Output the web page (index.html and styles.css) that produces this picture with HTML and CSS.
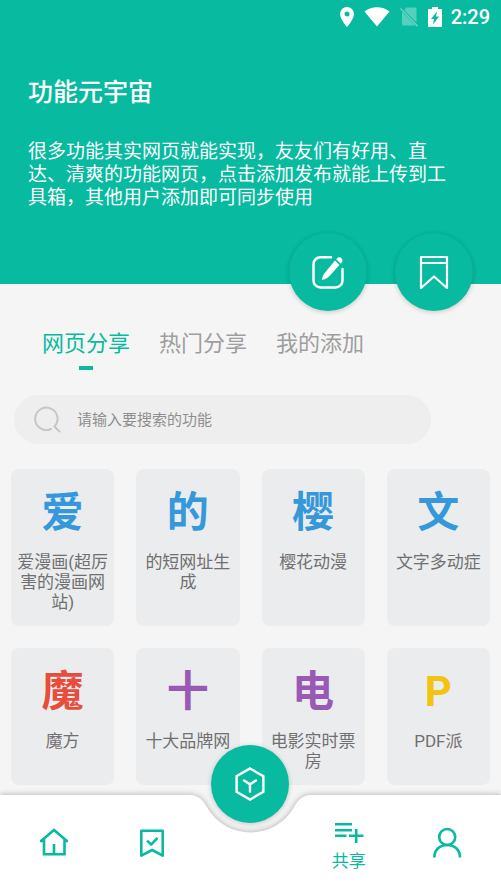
FILE: index.html
```html
<!DOCTYPE html>
<html lang="zh-CN">
<head>
<meta charset="utf-8">
<meta name="viewport" content="width=device-width, initial-scale=1">
<title>功能元宇宙</title>
<link rel="stylesheet" href="styles.css">
</head>
<body>
<header class="hero">
  <div class="status">
    <svg class="status-pin" width="14" height="20" viewBox="0 0 14 20"><path fill="#fff" fill-rule="evenodd" d="M7 0a7 7 0 0 0-7 7c0 5 7 13 7 13s7-8 7-13a7 7 0 0 0-7-7zm0 4.500a2.500 2.500 0 1 1 0 5 2.500 2.500 0 0 1 0-5z"/></svg>
    <svg class="status-wifi" width="26" height="20" viewBox="0 0 26 20"><path fill="#fff" d="M0.500 4.500C7.500-1.300 18.500-1.300 25.500 4.500L13 19.500z"/></svg>
    <svg class="status-sim" width="18" height="20" viewBox="0 0 18 20"><path fill="#fff" opacity=".32" d="M6.500 0.500H15a1.500 1.500 0 0 1 1.500 1.500v13.500L4 3zM2 4.800L15.500 18.500H3.500A1.500 1.500 0 0 1 2 17z"/><path stroke="#fff" opacity=".4" stroke-width="1.300" d="M0.500 1.500L17.500 19"/></svg>
    <svg class="status-battery" width="14" height="20" viewBox="0 0 14 20"><path fill="#fff" d="M4 0h6v2h3a1 1 0 0 1 1 1v16a1 1 0 0 1-1 1H1a1 1 0 0 1-1-1V3a1 1 0 0 1 1-1h3z"/><path fill="#07baa0" d="M9 4.500L3 12h3L5 17.500l6-8H8z"/></svg>
    <span>2:29</span>
  </div>
  <h1>功能元宇宙</h1>
  <p>很多功能其实网页就能实现，友友们有好用、直达、清爽的功能网页，点击添加发布就能上传到工具箱，其他用户添加即可同步使用</p>
</header>

<main>
  <div class="actions">
    <button class="fab" type="button" aria-label="添加">
      <svg width="36" height="36" viewBox="0 0 36 36" fill="none"><path stroke="#fff" stroke-width="2.500" stroke-linecap="round" d="M21 3.200H10.500a7 7 0 0 0-7 7V26.500a7 7 0 0 0 7 7H25.500a7 7 0 0 0 7-7V15"/><path fill="#fff" d="M25 6.500l4.500 4.500L19 22.500c-2 2-4.500 3-7.200 3.500.5-2.700 1.500-5.500 3.500-7.700zM26.200 5.200l1.300-1.200c2.400-2.200 6.500 1.500 4.500 4.300l-1.300 1.500z"/></svg>
    </button>
    <button class="fab" type="button" aria-label="收藏">
      <svg width="36" height="36" viewBox="0 0 36 36" fill="none" stroke="#fff" stroke-width="2.200" stroke-linejoin="round"><path d="M5 3h26v31L18 22.500 5 34zM5 9h26"/></svg>
    </button>
  </div>

  <div class="tabs" role="tablist">
    <button class="tab tab-active" type="button" role="tab" aria-selected="true">网页分享</button>
    <button class="tab" type="button" role="tab" aria-selected="false">热门分享</button>
    <button class="tab" type="button" role="tab" aria-selected="false">我的添加</button>
  </div>

  <label class="search">
    <svg width="28" height="28" viewBox="0 0 28 28" fill="none" stroke="#c6c6c6" stroke-width="2" stroke-linecap="round"><path d="M17 23A11.200 11.200 0 1 1 20.500 20.500L25.500 25.500"/></svg>
    <input type="search" placeholder="请输入要搜索的功能" aria-label="搜索功能">
  </label>

  <div class="grid">
    <a class="card" href="#"><strong class="blue">爱</strong><span>爱漫画(超厉害的漫画网站)</span></a>
    <a class="card" href="#"><strong class="blue">的</strong><span>的短网址生成</span></a>
    <a class="card" href="#"><strong class="blue">樱</strong><span>樱花动漫</span></a>
    <a class="card" href="#"><strong class="blue">文</strong><span>文字多动症</span></a>
    <a class="card" href="#"><strong class="red">魔</strong><span>魔方</span></a>
    <a class="card" href="#"><strong class="purple">十</strong><span>十大品牌网</span></a>
    <a class="card" href="#"><strong class="purple">电</strong><span>电影实时票房</span></a>
    <a class="card" href="#"><strong class="yellow">P</strong><span>PDF派</span></a>
  </div>
</main>

<nav class="nav">
  <div class="nav-shape">
    <i></i>
    <svg width="121" height="95" viewBox="0 0 121 95"><path fill="#fff" d="M0 0C8 0 13 5 17.500 13A50 50 0 0 0 103.500 13C108 5 113 0 121 0V95H0z"/></svg>
    <i></i>
  </div>
  <a class="nav-item" href="#" aria-label="首页">
    <svg width="30" height="30" viewBox="0 0 30 30" fill="none" stroke="#07baa0" stroke-width="2.600"><path d="M1.500 13.500L15 2 28.500 13.500M5 11.500v14.700h20.500V11.500M15 27V16M1 13h5M24.500 13H29"/></svg>
  </a>
  <a class="nav-item" href="#" aria-label="书签">
    <svg width="30" height="30" viewBox="0 0 30 30" fill="none" stroke="#07baa0" stroke-width="2.600" stroke-linejoin="round"><path d="M4.300 2.700h21.400V27.700L15.200 22 4.300 27.700z"/><path d="M10.200 12.700l4 4 6.300-6.800"/></svg>
  </a>
  <button class="fab fab-center" type="button" aria-label="工具箱">
    <svg width="36" height="36" viewBox="0 0 36 36" fill="none" stroke="#fff" stroke-width="2.400"><path d="M18 2.500L31.400 10.200V25.800L18 33.500 4.600 25.800V10.200z"/><path stroke-linecap="round" d="M12 14.500l6 3.800 6-3.800M18 18.300V25.500"/></svg>
  </button>
  <a class="nav-item nav-current" href="#">
    <svg width="30" height="24" viewBox="0 0 30 24" fill="none" stroke="#07baa0" stroke-width="2.600"><path d="M1 4.300h17M1 10.300h17M1 15.800h11.500M15 15.800h14.500M22.200 9v14"/></svg>
    <span>共享</span>
  </a>
  <a class="nav-item" href="#" aria-label="我的">
    <svg width="30" height="32" viewBox="0 0 30 32" fill="none" stroke="#07baa0" stroke-width="2.600"><circle cx="15.200" cy="10" r="8"/><path d="M2.300 30.500C2.300 22.500 8 18 15.200 18S28 22.500 28 30.500"/></svg>
  </a>
</nav>
</body>
</html>
```
FILE: styles.css
```css
:root {
  --teal: #07baa0;
}

* {
  box-sizing: border-box;
}

body {
  margin: 0;
  min-height: 100vh;
  display: flex;
  flex-direction: column;
  background: #f5f5f5;
  font-family: Roboto, "Noto Sans CJK SC", sans-serif;
}

button {
  border: 0;
  padding: 0;
  background: none;
  font: inherit;
}

a {
  color: inherit;
  text-decoration: none;
}

svg {
  display: block;
  flex: none;
}

.hero {
  background: var(--teal);
  color: #fff;
  padding-bottom: 75px;
}

.status {
  display: flex;
  justify-content: flex-end;
  align-items: center;
  height: 34px;
  padding-right: 11px;
  font-size: 20px;
  font-weight: 500;
}

.status-pin,
.status-wifi,
.status-sim {
  margin-right: 10px;
}

.status-battery {
  margin-right: 9px;
}

.hero h1 {
  margin: 42px 28px 30px;
  font-size: 25px;
  line-height: 34px;
  font-weight: 500;
}

.hero p {
  margin: 0 44px 0 28px;
  font-size: 19px;
  line-height: 23px;
}

.actions {
  display: flex;
  justify-content: flex-end;
  gap: 28px;
  margin-top: -51px;
  padding-right: 28px;
}

.fab {
  display: flex;
  align-items: center;
  justify-content: center;
  width: 78px;
  height: 78px;
  border-radius: 50%;
  background: var(--teal);
  box-shadow: 0 1px 5px rgba(0, 0, 0, .2);
}

.tabs {
  display: flex;
  gap: 29px;
  margin-top: 17px;
  padding: 0 42px;
}

.tab {
  display: flex;
  flex-direction: column;
  align-items: center;
  gap: 6px;
  color: #9e9e9e;
  font-size: 22px;
  line-height: 32px;
}

.tab::after {
  content: "";
  width: 14px;
  height: 4px;
}

.tab-active {
  color: var(--teal);
}

.tab-active::after {
  background: var(--teal);
}

.search {
  display: flex;
  align-items: center;
  gap: 15px;
  height: 49px;
  margin: 25px 70px 25px 14px;
  padding: 0 20px;
  border-radius: 25px;
  background: #eee;
}

.search input {
  flex: 1;
  min-width: 0;
  border: 0;
  padding: 0;
  outline: 0;
  background: none;
  color: #555;
  font: inherit;
  font-size: 15px;
}

.search input::placeholder {
  color: #8e8e8e;
  opacity: 1;
}

.grid {
  display: grid;
  grid-template-columns: repeat(4, 1fr);
  gap: 22px;
  padding: 0 11px 10px;
}

.card {
  display: flex;
  flex-direction: column;
  align-items: center;
  gap: 11px;
  padding: 16px 4px 14px;
  border-radius: 8px;
  background: #ebecee;
  color: #707070;
  font-size: 17px;
  line-height: 20px;
  text-align: center;
}

.card strong {
  font-size: 42px;
  line-height: 56px;
  font-weight: 700;
}

.blue {
  color: #3498db;
}

.red {
  color: #e74c3c;
}

.purple {
  color: #9b59b6;
}

.yellow {
  color: #f1c40f;
}

.nav {
  position: sticky;
  bottom: 0;
  display: grid;
  grid-template-columns: repeat(5, 1fr);
  justify-items: center;
  height: 95px;
  margin-top: auto;
  padding: 0 5px;
}

.nav-shape {
  position: absolute;
  inset: 0;
  display: flex;
  filter: drop-shadow(0 0 3px rgba(0, 0, 0, .3));
}

.nav-shape i {
  flex: 1;
  background: #fff;
}

.nav-item {
  position: relative;
  display: flex;
  flex-direction: column;
  align-items: center;
  justify-content: center;
  gap: 5px;
  color: var(--teal);
  font-size: 17px;
  line-height: 24px;
}

.nav-current {
  padding-top: 7px;
}

.fab-center {
  position: relative;
  margin-top: -50px;
}
```
